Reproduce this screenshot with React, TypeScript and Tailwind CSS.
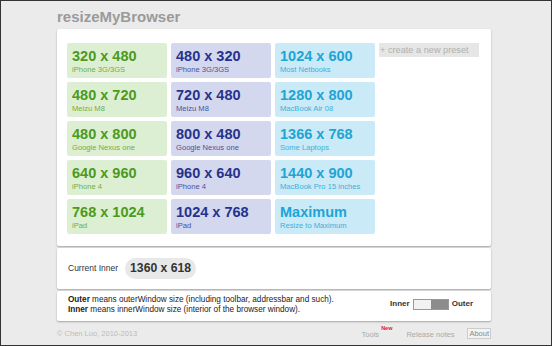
import React from "react";

type Preset = { size: string; label: string };

const green: Preset[] = [
  { size: "320 x 480", label: "iPhone 3G/3GS" },
  { size: "480 x 720", label: "Meizu M8" },
  { size: "480 x 800", label: "Google Nexus one" },
  { size: "640 x 960", label: "iPhone 4" },
  { size: "768 x 1024", label: "iPad" },
];
const blue: Preset[] = [
  { size: "480 x 320", label: "iPhone 3G/3GS" },
  { size: "720 x 480", label: "Meizu M8" },
  { size: "800 x 480", label: "Google Nexus one" },
  { size: "960 x 640", label: "iPhone 4" },
  { size: "1024 x 768", label: "iPad" },
];
const cyan: Preset[] = [
  { size: "1024 x 600", label: "Most Netbooks" },
  { size: "1280 x 800", label: "MacBook Air 08" },
  { size: "1366 x 768", label: "Some Laptops" },
  { size: "1440 x 900", label: "MacBook Pro 15 inches" },
  { size: "Maximum", label: "Resize to Maximum" },
];

function Card({ p, kind }: { p: Preset; kind: "g" | "b" | "c" }) {
  const bg = kind === "g" ? "bg-[#ddefd3]" : kind === "b" ? "bg-[#d4d8ee]" : "bg-[#c9eaf6]";
  const fg = kind === "g" ? "text-[#4b9a1c]" : kind === "b" ? "text-[#26328c]" : "text-[#1fa4d5]";
  const sub = kind === "g" ? "text-[#72ad4a]" : kind === "b" ? "text-[#4553a0]" : "text-[#3fb0db]";
  return (
    <div className={`h-[35px] rounded-[2px] pl-[5px] pt-[5px] ${bg}`}>
      <div className={`text-[14.5px] leading-[16px] font-bold ${fg}`}>{p.size}</div>
      <div className={`text-[7.6px] leading-[9px] mt-[1px] ${sub}`}>{p.label}</div>
    </div>
  );
}

export default function App() {
  return (
    <div className="w-[552px] h-[346px] border border-[#333] bg-[#ebebeb] font-['Liberation_Sans',Arial,sans-serif] overflow-hidden">
      <div className="ml-[56px] w-[434px]">
        <div className="pt-[7px] text-[15px] leading-[17px] font-bold text-[#9a9a9a]">resizeMyBrowser</div>
        <div className="mt-[4px] bg-white rounded-[2px] shadow-[0_1px_2px_rgba(0,0,0,0.3)] pl-[10px] pt-[14px] h-[217px]">
          <div className="grid grid-cols-[100px_100px_100px_100px] gap-x-[4px] gap-y-[4px]">
            {green.map((g, i) => (
              <React.Fragment key={i}>
                <Card p={g} kind="g" />
                <Card p={blue[i]} kind="b" />
                <Card p={cyan[i]} kind="c" />
                {i === 0 ? (
                  <div className="h-[14px] bg-[#e6e6e6] text-[9.2px] leading-[14px] text-[#b0b0b0] pl-[1px]">
                    + create a new preset
                  </div>
                ) : (
                  <div />
                )}
              </React.Fragment>
            ))}
          </div>
        </div>
        <div className="mt-[2px] h-[41px] bg-white rounded-[2px] shadow-[0_1px_2px_rgba(0,0,0,0.3)] flex items-center pl-[11px]">
          <span className="text-[8.5px] text-[#333]">Current Inner</span>
          <span className="ml-[7px] h-[21px] rounded-full bg-[#e8e8e8] px-[5px] flex items-center text-[12.2px] font-bold text-[#333]">
            1360 x 618
          </span>
        </div>
        <div className="mt-[2px] h-[30px] bg-white rounded-[2px] shadow-[0_1px_2px_rgba(0,0,0,0.3)] flex items-center justify-between pl-[11px] pr-[18px]">
          <div className="text-[8.2px] leading-[10px] text-[#222] -mt-[3px]">
            <div>
              <b>Outer</b> means outerWindow size (including toolbar, addressbar and such).
            </div>
            <div>
              <b>Inner</b> means innerWindow size (interior of the browser window).
            </div>
          </div>
          <div className="flex items-center gap-[2px] text-[8px] font-bold text-[#333] -mt-[4px]">
            <span>Inner</span>
            <div className="flex w-[36px] h-[11px] border border-[#999] ml-[1px] mr-[1px]">
              <div className="flex-1 bg-[#f2f2f2]" />
              <div className="flex-1 bg-[#8c8c8c]" />
            </div>
            <span>Outer</span>
          </div>
        </div>
        <div className="mt-[3px] flex items-center justify-between h-[20px] text-[7.5px] text-[#aaa]">
          <span className="text-[#bbb]">© Chen Luo, 2010-2013</span>
          <div className="flex items-start">
            <span className="mt-[2px]">Tools</span>
            <span className="text-[5.5px] leading-[6px] text-[#e02020] font-bold ml-[2px] -mt-[2px]">New</span>
            <span className="ml-[14px] mt-[2px]">Release notes</span>
            <span className="ml-[13px] mt-[1px] border border-[#ccc] bg-[#f3f3f3] px-[1px] leading-[9px] text-[#888]">About</span>
          </div>
        </div>
      </div>
    </div>
  );
}
